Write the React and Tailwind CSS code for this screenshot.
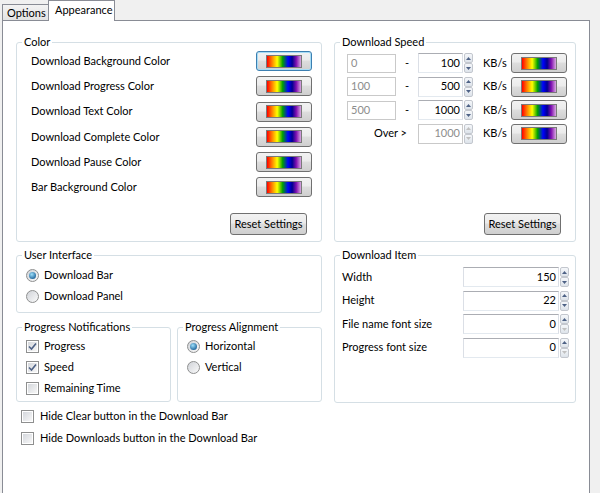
import clsx from "clsx";

const rainbow =
  "bg-[linear-gradient(to_right,#ff0000,#ff7a00_14%,#ffff00_30%,#00a000_46%,#0000ff_62%,#000090_74%,#8010b0_86%,#d8a8e0)]";
const btnFace =
  "bg-[linear-gradient(#f2f2f2,#ebebeb_45%,#dddddd_50%,#cfcfcf)]";

function ColorButton({ focused }) {
  return (
    <div
      className={clsx(
        "w-[56px] h-[20px] rounded-[3px] border flex items-center justify-center",
        btnFace,
        focused
          ? "border-[#3c7fb1] shadow-[inset_0_0_0_1px_#a7dcf5]"
          : "border-[#707070]"
      )}
    >
      <div className={clsx("w-[36px] h-[13px] border border-[#7a7a7a]", rainbow)} />
    </div>
  );
}

function ResetButton() {
  return (
    <div
      className={clsx(
        "w-[77px] h-[22px] rounded-[3px] border border-[#707070] flex items-center justify-center text-[11px] text-black",
        btnFace
      )}
    >
      Reset Settings
    </div>
  );
}

function Arrow({ up, disabled }) {
  return (
    <svg width="5" height="3" viewBox="0 0 5 3" className={disabled ? "fill-[#c0c0c0]" : "fill-[#4d6185]"}>
      <path d={up ? "M0 3L2.5 0L5 3z" : "M0 0L2.5 3L5 0z"} />
    </svg>
  );
}

function Spinner({ upDisabled, downDisabled }) {
  return (
    <div className="w-[9px] h-[20px] flex flex-col ml-px">
      <div className="h-[10px] border border-[#c3c7ce] rounded-[2px] bg-[linear-gradient(#f5f7fa,#dde3ea)] flex items-center justify-center">
        <Arrow up disabled={upDisabled} />
      </div>
      <div className="h-[10px] border border-[#c3c7ce] rounded-[2px] bg-[linear-gradient(#f5f7fa,#dde3ea)] flex items-center justify-center">
        <Arrow disabled={downDisabled} />
      </div>
    </div>
  );
}

function SpinBox({ value, width, disabled, upDisabled, downDisabled }) {
  return (
    <div className="flex h-[20px]">
      <div
        className={clsx(
          "h-[20px] border flex items-center justify-end pr-[2px] text-[11px]",
          width,
          disabled
            ? "border-[#c9c9c9] text-[#8d8d8d]"
            : "border-[#dbdfe6] border-t-[#abadb3] border-b-[#e3e9ef] text-black"
        )}
      >
        {value}
      </div>
      <Spinner upDisabled={disabled || upDisabled} downDisabled={disabled || downDisabled} />
    </div>
  );
}

function Field({ value }) {
  return (
    <div className="w-[49px] h-[19px] border border-[#c9c9c9] flex items-center pl-[3px] text-[11px] text-[#8d8d8d]">
      {value}
    </div>
  );
}

function Group({ title, className, children }) {
  return (
    <fieldset className={clsx("border border-[#d5dfe5] rounded-[3px] min-w-0", className)}>
      <legend className="ml-[5px] px-[2px] text-[11px] leading-[16px] text-black">{title}</legend>
      {children}
    </fieldset>
  );
}

function CheckBox({ checked }) {
  return (
    <div className="w-[13px] h-[13px] border border-[#8e8f8f] bg-white p-px shrink-0">
      <div className="w-full h-full bg-[linear-gradient(135deg,#d4d7dc,#f7f7f7)] flex items-center justify-center">
        {checked && (
          <svg width="9" height="9" viewBox="0 0 9 9">
            <path d="M1 4.5L3.5 7L8 1.5" fill="none" stroke="#4d6185" strokeWidth="1.6" />
          </svg>
        )}
      </div>
    </div>
  );
}

function Radio({ checked }) {
  return (
    <div className="w-[13px] h-[13px] rounded-full border border-[#8e8f8f] bg-[linear-gradient(135deg,#d0d3d8,#fafafa)] flex items-center justify-center shrink-0">
      {checked && (
        <div className="w-[7px] h-[7px] rounded-full bg-[radial-gradient(circle_at_40%_35%,#9ee0fb,#2a6fa3_70%,#1c4f7a)]" />
      )}
    </div>
  );
}

function Option({ kind, checked, label }) {
  return (
    <div className="h-[21px] flex items-center gap-[5px] text-[11px] text-black">
      {kind === "radio" ? <Radio checked={checked} /> : <CheckBox checked={checked} />}
      <span>{label}</span>
    </div>
  );
}

const colorRows = [
  "Download Background Color",
  "Download Progress Color",
  "Download Text Color",
  "Download Complete Color",
  "Download Pause Color",
  "Bar Background Color",
];

const speedRows = [
  { from: "0", to: "100" },
  { from: "100", to: "500" },
  { from: "500", to: "1000" },
];

const itemRows = [
  { label: "Width", value: "150" },
  { label: "Height", value: "22" },
  { label: "File name font size", value: "0", downDisabled: true },
  { label: "Progress font size", value: "0", downDisabled: true },
];

export default function App() {
  return (
    <div className="w-[600px] h-[493px] bg-[#f0f0f0] overflow-hidden font-['Lato',sans-serif] text-black">
      {/* tabs */}
      <div className="h-[20px] flex items-end pl-[2px]">
        <div className="h-[16px] w-[47px] border border-b-0 border-[#898c95] bg-[linear-gradient(#f3f3f3,#e3e3e3)] text-[11px] leading-[15px] pl-[4px]">
          Options
        </div>
        <div className="relative z-10 -mb-px -ml-px h-[21px] w-[67px] border border-b-0 border-[#898c95] bg-white text-[11px] leading-[18px] pl-[6px]">
          Appearance
        </div>
      </div>

      {/* panel */}
      <div className="ml-[2px] w-[588px] h-[474px] border border-[#898c95] bg-white pl-[13px] pt-[13px]">
        <div className="grid grid-cols-[306px_242px] gap-x-[12px]">
          {/* left column */}
          <div className="flex flex-col">
            <Group title="Color" className="h-[208px]">
              <div className="h-[191px] flex flex-col">
                <div className="flex flex-col gap-[5.3px] pt-px pl-[14px] pr-[9px]">
                  {colorRows.map((r, i) => (
                    <div key={r} className="h-[20px] flex items-center justify-between text-[11px]">
                      <span>{r}</span>
                      <ColorButton focused={i === 0} />
                    </div>
                  ))}
                </div>
                <div className="flex-1" />
                <div className="self-end mr-[14px] mb-[6px]">
                  <ResetButton />
                </div>
              </div>
            </Group>

            <Group title="User Interface" className="h-[66px] mt-[5px]">
              <div className="pl-[9px] pt-[2px]">
                <Option kind="radio" checked label="Download Bar" />
                <Option kind="radio" label="Download Panel" />
              </div>
            </Group>

            <div className="flex gap-[6px] mt-[6px]">
              <Group title="Progress Notifications" className="w-[155px] h-[83px]">
                <div className="pl-[9px] pt-px">
                  <Option kind="check" checked label="Progress" />
                  <Option kind="check" checked label="Speed" />
                  <Option kind="check" label="Remaining Time" />
                </div>
              </Group>
              <Group title="Progress Alignment" className="w-[145px] h-[83px]">
                <div className="pl-[9px] pt-px">
                  <Option kind="radio" checked label="Horizontal" />
                  <Option kind="radio" label="Vertical" />
                </div>
              </Group>
            </div>
          </div>

          {/* right column */}
          <div className="flex flex-col">
            <Group title="Download Speed" className="h-[208px]">
              <div className="h-[191px] flex flex-col">
                <div className="flex flex-col gap-[3.5px] pt-[3px] pl-[12px]">
                  {speedRows.map((r) => (
                    <div key={r.from} className="h-[20px] flex items-center text-[11px]">
                      <Field value={r.from} />
                      <span className="w-[22px] text-center">-</span>
                      <SpinBox value={r.to} width="w-[45px]" />
                      <span className="ml-[10px] w-[28px]">KB/s</span>
                      <ColorButton />
                    </div>
                  ))}
                  <div className="h-[20px] flex items-center text-[11px]">
                    <span className="w-[61px] text-right pr-[1px]">Over &gt;</span>
                    <span className="w-[10px]" />
                    <SpinBox value="1000" width="w-[45px]" disabled />
                    <span className="ml-[10px] w-[28px]">KB/s</span>
                    <ColorButton />
                  </div>
                </div>
                <div className="flex-1" />
                <div className="self-end mr-[14px] mb-[6px]">
                  <ResetButton />
                </div>
              </div>
            </Group>

            <Group title="Download Item" className="h-[156px] mt-[5px]">
              <div className="flex flex-col gap-[3.5px] pt-[4px] pl-[7px]">
                {itemRows.map((r) => (
                  <div key={r.label} className="h-[20px] flex items-center text-[11px]">
                    <span className="w-[121px]">{r.label}</span>
                    <SpinBox value={r.value} width="w-[96px]" downDisabled={r.downDisabled} />
                  </div>
                ))}
              </div>
            </Group>
          </div>
        </div>

        {/* bottom options */}
        <div className="mt-[2px] pl-[5px]">
          <div className="h-[22px] flex items-center gap-[6px] text-[11px]">
            <CheckBox />
            <span>Hide Clear button in the Download Bar</span>
          </div>
          <div className="h-[22px] flex items-center gap-[6px] text-[11px]">
            <CheckBox />
            <span>Hide Downloads button in the Download Bar</span>
          </div>
        </div>
      </div>
    </div>
  );
}
